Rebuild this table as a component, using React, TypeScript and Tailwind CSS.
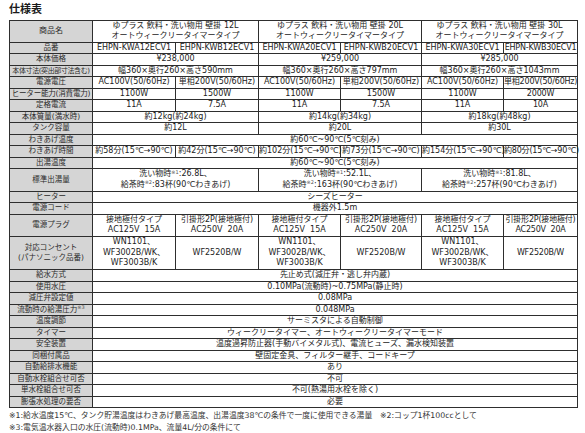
import React from "react";

// 仕様表 — ゆプラス 飲料・洗い物用 壁掛 spec sheet

const LBL =
  "bg-[#d5d5d5] border border-[#2e2e2e] p-0 text-center align-middle whitespace-nowrap text-[7.5px] leading-[10px] font-normal text-[#2a2a2a]";
const TD =
  "border border-[#2e2e2e] p-0 text-center align-middle whitespace-nowrap text-[8px] leading-[10.5px] text-[#222]";
// last column is a bit narrower in the original
const TD_LAST = TD + " text-[7.3px] tracking-[-0.2px]";

const H1 = "h-[11.33px]";
const H2 = "h-[22.67px]";
const H3 = "h-[32.7px]";

function Note({ n }: { n: string }) {
  return <span className="relative -top-[2.5px] text-[5px] text-[#555]">※{n}</span>;
}

function Row({ label, cells, h = H1 }: { label: React.ReactNode; cells: React.ReactNode[]; h?: string }) {
  return (
    <tr className={h}>
      <th className={LBL}>{label}</th>
      {cells.map((c, i) => (
        <td key={i} className={i === cells.length - 1 && cells.length === 6 ? TD_LAST : TD}>
          {c}
        </td>
      ))}
    </tr>
  );
}

function Trio({ label, cells, h = H1 }: { label: React.ReactNode; cells: React.ReactNode[]; h?: string }) {
  return (
    <tr className={h}>
      <th className={LBL}>{label}</th>
      {cells.map((c, i) => (
        <td key={i} colSpan={2} className={TD}>
          {c}
        </td>
      ))}
    </tr>
  );
}

function Full({ label, value }: { label: React.ReactNode; value: React.ReactNode }) {
  return (
    <tr className={H1}>
      <th className={LBL}>{label}</th>
      <td colSpan={6} className={TD}>
        {value}
      </td>
    </tr>
  );
}

const sizes = ["12L", "20L", "30L"];

export default function App() {
  return (
    <div className="w-[585px] h-[433px] bg-white overflow-hidden font-['DejaVu_Sans','Noto_Sans_CJK_JP',sans-serif] text-[#222]">
      <div className="pl-[9px] pt-[2px]">
        <h1 className="text-[11px] leading-[13px] font-bold text-[#1a1a1a] font-['Noto_Sans_CJK_JP',sans-serif]">仕様表</h1>
        <table className="mt-[5px] w-[568px] table-fixed border-collapse">
          <colgroup>
            <col className="w-[83px]" />
            <col className="w-[83px]" />
            <col className="w-[83px]" />
            <col className="w-[82px]" />
            <col className="w-[81px]" />
            <col className="w-[82px]" />
            <col className="w-[74px]" />
          </colgroup>
          <tbody>
            <tr className="h-[21.5px]">
              <th className={LBL + " text-[8px]"}>商品名</th>
              {sizes.map((s) => (
                <td key={s} colSpan={2} className={TD + " leading-[10px]"}>
                  ゆプラス 飲料・洗い物用 壁掛 {s}
                  <br />
                  オートウィークリータイマータイプ
                </td>
              ))}
            </tr>
            <Row
              label="品番"
              cells={[
                "EHPN-KWA12ECV1",
                "EHPN-KWB12ECV1",
                "EHPN-KWA20ECV1",
                "EHPN-KWB20ECV1",
                "EHPN-KWA30ECV1",
                "EHPN-KWB30ECV1",
              ]}
            />
            <Trio label="本体価格" cells={["¥238,000", "¥259,000", "¥285,000"]} />
            <Trio
              label={<span className="text-[7px] tracking-[-0.4px]">本体寸法(突出部寸法含む)</span>}
              cells={["幅360×奥行260×高さ590mm", "幅360×奥行260×高さ797mm", "幅360×奥行260×高さ1043mm"]}
            />
            <Row
              label="電源電圧"
              cells={[
                "AC100V(50/60Hz)",
                "単相200V(50/60Hz)",
                "AC100V(50/60Hz)",
                "単相200V(50/60Hz)",
                "AC100V(50/60Hz)",
                "単相200V(50/60Hz)",
              ]}
            />
            <Row
              label={<span className="tracking-[-0.2px]">ヒーター能力(消費電力)</span>}
              cells={["1100W", "1500W", "1100W", "1500W", "1100W", "2000W"]}
            />
            <Row label="定格電流" cells={["11A", "7.5A", "11A", "7.5A", "11A", "10A"]} />
            <Trio label="本体質量(満水時)" cells={["約12kg(約24kg)", "約14kg(約34kg)", "約18kg(約48kg)"]} />
            <Trio label="タンク容量" cells={["約12L", "約20L", "約30L"]} />
            <Full label="わきあげ温度" value="約60℃~90℃(5℃刻み)" />
            <Row
              label="わきあげ時間"
              cells={[
                "約58分(15℃→90℃)",
                "約42分(15℃→90℃)",
                "約102分(15℃→90℃)",
                "約73分(15℃→90℃)",
                "約154分(15℃→90℃)",
                "約80分(15℃→90℃)",
              ]}
            />
            <Full label="出湯温度" value="約60℃~90℃(5℃刻み)" />
            <Trio
              label="標準出湯量"
              h={H2}
              cells={[
                ["26.8L", "83"],
                ["52.1L", "163"],
                ["81.8L", "257"],
              ].map(([l, c]) => (
                <>
                  洗い物時<Note n="1" />:{l}、
                  <br />
                  給茶時<Note n="2" />:{c}杯(90℃わきあげ)
                </>
              ))}
            />
            <Full label="ヒーター" value="シーズヒーター" />
            <Full label="電源コード" value="機器外1.5m" />
            <Row
              label="電源プラグ"
              h={H2}
              cells={[0, 1, 2, 3, 4, 5].map((i) =>
                i % 2 === 0 ? (
                  <>
                    接地極付タイプ
                    <br />
                    AC125V&nbsp;&nbsp;15A
                  </>
                ) : (
                  <>
                    引掛形2P(接地極付)
                    <br />
                    AC250V&nbsp;&nbsp;20A
                  </>
                )
              )}
            />
            <Row
              label={
                <>
                  対応コンセント
                  <br />
                  (パナソニック品番)
                </>
              }
              h={H3}
              cells={[0, 1, 2, 3, 4, 5].map((i) =>
                i % 2 === 0 ? (
                  <>
                    WN1101、
                    <br />
                    WF3002B/WK、
                    <br />
                    WF3003B/K
                  </>
                ) : (
                  "WF2520B/W"
                )
              )}
            />
            <Full label="給水方式" value="先止め式(減圧弁・逃し弁内蔵)" />
            <Full label="使用水圧" value="0.10MPa(流動時)~0.75MPa(静止時)" />
            <Full label="減圧弁設定値" value="0.08MPa" />
            <Full
              label={
                <>
                  流動時の給湯圧力<Note n="3" />
                </>
              }
              value="0.048MPa"
            />
            <Full label="温度調節" value="サーミスタによる自動制御" />
            <Full label="タイマー" value="ウィークリータイマー、オートウィークリータイマーモード" />
            <Full label="安全装置" value="温度過昇防止器(手動バイメタル式)、電流ヒューズ、漏水検知装置" />
            <Full label="同梱付属品" value="壁固定金具、フィルター継手、コードキープ" />
            <Full label="自動給排水機能" value="あり" />
            <Full label="自動水栓組合せ可否" value="不可" />
            <Full label="単水栓組合せ可否" value="不可(熱湯用水栓を除く)" />
            <Full label="膨張水処理の要否" value="必要" />
          </tbody>
        </table>
        <div className="mt-[2px] text-[7.8px] leading-[11.5px] text-[#333] whitespace-nowrap">
          <p>
            ※1:給水温度15℃、タンク貯湯温度はわきあげ最高温度、出湯温度38℃の条件で一度に使用できる湯量　※2:コップ1杯100ccとして
          </p>
          <p>※3:電気温水器入口の水圧(流動時)0.1MPa、流量4L/分の条件にて</p>
        </div>
      </div>
    </div>
  );
}
